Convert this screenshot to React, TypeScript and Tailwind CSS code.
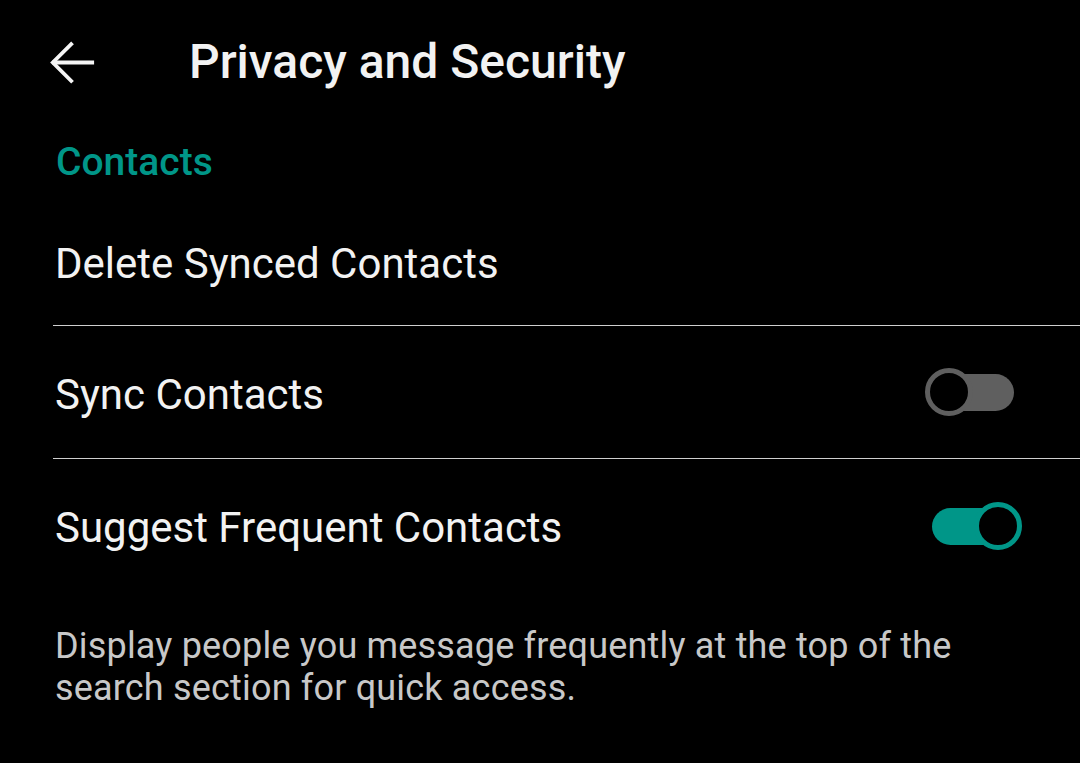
import { useState } from 'react';

interface ToggleProps {
  checked: boolean;
  onChange: () => void;
}

const Toggle: React.FC<ToggleProps> = ({ checked, onChange }) => {
  return (
    <button
      type="button"
      onClick={onChange}
      className="relative w-[97px] h-[52px] flex items-center shrink-0"
    >
      <span
        className={`absolute left-[7px] w-[82px] h-[37px] rounded-full ${checked ? 'bg-[#009688]' : 'bg-[#5f5f5f]'}`}
      />
      <span
        className={`absolute top-[2px] w-[48px] h-[48px] rounded-full bg-black border-[5px] ${
          checked ? 'left-[49px] border-[#009688]' : 'left-0 border-[#5f5f5f]'
        }`}
      />
    </button>
  );
};

const App: React.FC = () => {
  const [syncContacts, setSyncContacts] = useState(false);
  const [suggestFrequent, setSuggestFrequent] = useState(true);

  return (
    <div className="w-[1080px] h-[763px] bg-black text-[#f2f2f2] overflow-hidden font-['Roboto',_sans-serif]">
      {/* top bar */}
      <div className="h-[124px] flex items-center">
        <svg
          className="ml-[41px] w-[63px] h-[63px]"
          viewBox="0 0 24 24"
          fill="none"
          stroke="#f5f5f5"
          strokeWidth="1.45"
          strokeLinecap="square"
        >
          <path d="M19.5 12H5" />
          <path d="M11.5 5 4.5 12l7 7" />
        </svg>
        <h1 className="ml-[85px] text-[48px] font-medium leading-none">Privacy and Security</h1>
      </div>

      <div className="pl-[53px]">
        <div className="h-[76px] flex items-center">
          <h2 className="ml-[3px] text-[39px] font-medium text-[#009688] leading-none">Contacts</h2>
        </div>

        <div className="h-[126px] flex items-center border-b border-[#cfcfcf]">
          <p className="ml-[2px] mt-[2px] text-[42px] leading-none">Delete Synced Contacts</p>
        </div>

        <div className="h-[133px] flex items-center justify-between pr-[58px] border-b border-[#cfcfcf]">
          <p className="ml-[2px] mt-[6px] text-[42px] leading-none">Sync Contacts</p>
          <Toggle checked={syncContacts} onChange={() => setSyncContacts(!syncContacts)} />
        </div>

        <div className="h-[134px] flex items-center justify-between pr-[58px]">
          <p className="ml-[2px] mt-[4px] text-[42px] leading-none">Suggest Frequent Contacts</p>
          <Toggle checked={suggestFrequent} onChange={() => setSuggestFrequent(!suggestFrequent)} />
        </div>

        <p className="ml-[2px] mt-[32px] pr-[70px] text-[36px] tracking-[0.18px] leading-[42px] text-[#c8c8c8]">
          Display people you message frequently at the top of the search section for quick access.
        </p>
      </div>
    </div>
  );
};

export default App;
